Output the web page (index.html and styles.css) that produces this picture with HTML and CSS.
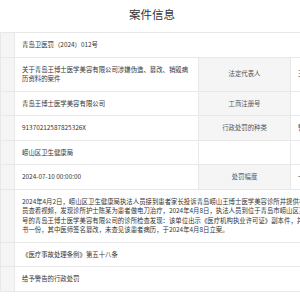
FILE: index.html
```html
<!DOCTYPE html>
<html lang="zh-CN">
<head>
  <meta charset="UTF-8">
  <meta name="viewport" content="width=device-width, initial-scale=1.0">
  <title>案件信息</title>
  <link rel="stylesheet" href="styles.css">
</head>
<body>
  <div class="title">案件信息</div>
  <table class="info-table">
    <colgroup>
      <col class="col-label-left">
      <col class="col-value">
      <col class="col-label">
      <col class="col-value-right">
    </colgroup>
    <tr>
      <td class="label"></td>
      <td colspan="3">青岛卫医罚（2024）012号</td>
    </tr>
    <tr>
      <td class="label"></td>
      <td>关于青岛王博士医学美容有限公司涉嫌伪造、篡改、销毁病历资料的案件</td>
      <td class="label">法定代表人</td>
      <td>王某某</td>
    </tr>
    <tr>
      <td class="label"></td>
      <td>青岛王博士医学美容有限公司</td>
      <td class="label">工商注册号</td>
      <td></td>
    </tr>
    <tr>
      <td class="label"></td>
      <td>91370212587825326X</td>
      <td class="label">行政处罚的种类</td>
      <td>警告</td>
    </tr>
    <tr>
      <td class="label"></td>
      <td>崂山区卫生健康局</td>
      <td></td>
      <td></td>
    </tr>
    <tr>
      <td class="label"></td>
      <td>2024-07-10 00:00:00</td>
      <td class="label">处罚幅度</td>
      <td>一般</td>
    </tr>
    <tr>
      <td class="label"></td>
      <td colspan="3" class="facts">2024年4月2日，崂山区卫生健康局执法人员接到患者家长投诉青岛崂山王博士医学美容诊所并提供视频，执法人<br>员查看视频，发现诊所护士陈某为患者做电刀治疗，2024年4月8日，执法人员到位于青岛市崂山区某某路某某<br>号的青岛王博士医学美容有限公司的诊所检查发现：该单位出示《医疗机构执业许可证》副本件，并出示病历<br>书一份，其中医师签名篡改，未查见该患者病历，于2024年4月8日立案。</td>
    </tr>
    <tr>
      <td class="label"></td>
      <td colspan="3">《医疗事故处理条例》第五十八条</td>
    </tr>
    <tr>
      <td class="label"></td>
      <td colspan="3">给予警告的行政处罚</td>
    </tr>
  </table>
</body>
</html>
```

FILE: styles.css
```css
body {
  margin: 0;
  padding: 0;
  background-color: #fff;
  color: #333;
  font-family: "Noto Sans CJK SC", "Noto Sans", sans-serif;
  overflow: hidden;
}
.title {
  height: 32px;
  line-height: 28px;
  padding-left: 4px;
  text-align: center;
  font-size: 11.5px;
  color: #333;
}
.info-table {
  border-collapse: collapse;
  table-layout: fixed;
  width: 500px;
  font-size: 6.4px;
  line-height: 9.5px;
}
.col-label-left {
  width: 14px;
}
.col-value {
  width: 184px;
}
.col-label {
  width: 92px;
}
.col-value-right {
  width: 210px;
}
.info-table td {
  border: 1px solid #e8e8e8;
  padding: 7px;
  vertical-align: middle;
}
.info-table .label {
  background-color: #f5f5f5;
  color: #555;
  text-align: center;
}
.info-table .facts {
  white-space: nowrap;
}
```
